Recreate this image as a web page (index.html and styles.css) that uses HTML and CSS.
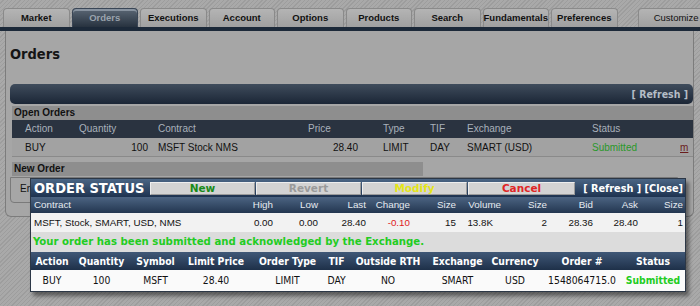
FILE: index.html
```html
<!DOCTYPE html>
<html>
<head>
<meta charset="utf-8">
<link rel="stylesheet" href="styles.css">
</head>
<body>
<div class="tabs">
  <div class="tab">Market</div>
  <div class="tab active">Orders</div>
  <div class="tab">Executions</div>
  <div class="tab">Account</div>
  <div class="tab">Options</div>
  <div class="tab">Products</div>
  <div class="tab">Search</div>
  <div class="tab">Fundamentals</div>
  <div class="tab">Preferences</div>
  <div class="tab custom">Customize</div>
</div>
<div class="navline"></div>
<div class="panel">
  <h1 class="title">Orders</h1>
  <div class="refreshbar"><span>[ Refresh ]</span></div>
  <div class="section">
    <div class="sechead">Open Orders</div>
    <div class="oo-row oo-head">
      <span>Action</span><span>Quantity</span><span>Contract</span><span>Price</span><span>Type</span><span>TIF</span><span>Exchange</span><span>Status</span><span></span>
    </div>
    <div class="oo-row oo-data">
      <span>BUY</span><span class="num">100</span><span>MSFT Stock NMS</span><span class="num price">28.40</span><span>LIMIT</span><span>DAY</span><span>SMART (USD)</span><span class="ok">Submitted</span><span class="link">m</span>
    </div>
    <div class="sechead short">New Order</div>
    <div class="entrybox">En</div>
  </div>
</div>

<div class="modal">
  <div class="mtitle">
    <span class="mname">ORDER STATUS</span>
    <div class="mbtns">
      <span class="btn new">New</span>
      <span class="btn revert">Revert</span>
      <span class="btn modify">Modify</span>
      <span class="btn cancel">Cancel</span>
    </div>
    <span class="mlinks">[ Refresh ] [Close]</span>
  </div>
  <div class="md-row md-head">
    <span class="c">Contract</span><span>High</span><span>Low</span><span>Last</span><span>Change</span><span>Size</span><span>Volume</span><span>Size</span><span>Bid</span><span>Ask</span><span>Size</span>
  </div>
  <div class="md-row md-data">
    <span class="c">MSFT, Stock, SMART, USD, NMS</span><span>0.00</span><span>0.00</span><span>28.40</span><span class="neg">-0.10</span><span>15</span><span class="vol">13.8K</span><span>2</span><span>28.36</span><span>28.40</span><span>1</span>
  </div>
  <div class="msg">Your order has been submitted and acknowledged by the Exchange.</div>
  <div class="od-row od-head">
    <span>Action</span><span>Quantity</span><span>Symbol</span><span>Limit Price</span><span>Order Type</span><span>TIF</span><span>Outside RTH</span><span>Exchange</span><span>Currency</span><span>Order #</span><span>Status</span>
  </div>
  <div class="od-row od-data">
    <span>BUY</span><span>100</span><span>MSFT</span><span>28.40</span><span>LIMIT</span><span>DAY</span><span>NO</span><span>SMART</span><span>USD</span><span>1548064715.0</span><span class="sub">Submitted</span>
  </div>
</div>
</body>
</html>
```
FILE: styles.css
```css
* { box-sizing: border-box; }
html, body { margin: 0; padding: 0; }
body {
  width: 700px;
  height: 306px;
  overflow: hidden;
  position: relative;
  font-family: "Liberation Sans", Arial, sans-serif;
  background: repeating-linear-gradient(135deg, #a9a9a9 0 2px, #9d9d9d 2px 3px);
}
.tabs {
  height: 27px;
  display: flex;
  align-items: flex-end;
  gap: 2px;
  padding-left: 3px;
}
.tab {
  width: 66.5px;
  height: 19px;
  flex: none;
  border: 1px solid #8a8a8a;
  border-bottom: none;
  border-radius: 4px 4px 0 0;
  background: linear-gradient(#b4b4b4, #a0a0a0);
  font-size: 9.5px;
  font-weight: bold;
  color: #111;
  text-align: center;
  line-height: 18px;
  white-space: nowrap;
}
.tab.active {
  background: linear-gradient(#5a6674, #27323f);
  border-color: #3a4656;
  color: #9aa3ad;
  box-shadow: inset 0 2px 0 #8893a0;
}
.tab.custom {
  margin-left: 18px;
  width: 70px;
  font-weight: normal;
  text-align: right;
  padding-right: 8px;
}
.navline { height: 4px; background: #1c2939; }
.panel {
  margin-left: 5px;
  width: 689px;
  height: 186px;
  background: #a6a6a6;
  border-left: 1px solid #7c7c7c;
  border-right: 1px solid #7c7c7c;
  border-bottom: 1px solid #7c7c7c;
  border-radius: 0 0 6px 6px;
  padding: 14px 0 0 4px;
}
.title {
  margin: 0;
  font-family: "DejaVu Sans", Verdana, sans-serif;
  font-stretch: condensed;
  font-size: 14.5px;
  font-weight: bold;
  line-height: 18px;
  color: #151515;
  height: 18px;
}
.refreshbar {
  margin-top: 21px;
  height: 20px;
  border-radius: 5px;
  background: linear-gradient(#3f4c5c, #1b2636);
  display: flex;
  justify-content: flex-end;
  align-items: center;
  padding-right: 5px;
}
.refreshbar span {
  font-family: "DejaVu Sans", Verdana, sans-serif;
  font-stretch: condensed;
  font-size: 10.5px;
  font-weight: bold;
  color: #b5bdc6;
}
.section { margin-top: 2px; margin-left: 2px; }
.sechead {
  height: 14px;
  background: #8e8e8e;
  font-size: 10px;
  font-weight: bold;
  line-height: 14px;
  color: #111;
  padding-left: 2px;
}
.sechead.short { width: 411px; margin-top: 5px; }
.oo-row {
  display: grid;
  grid-template-columns: 54px 79px 150px 75px 47px 37px 125px 88px 1fr;
  padding-left: 13px;
  font-size: 10px;
  white-space: nowrap;
}
.oo-head { height: 18px; line-height: 18px; background: #2a3340; color: #a9b1bb; }
.oo-data { height: 19px; line-height: 19px; background: #a2a2a2; color: #111; border-bottom: 1px solid #8a8a8a; }
.oo-data .num { text-align: right; padding-right: 10px; }
.oo-data .price { padding-right: 25px; }
.oo-data .ok { color: #2a982a; }
.oo-data .link { color: #6a1c1c; text-decoration: underline; }
.entrybox {
  margin-top: 1px;
  margin-left: -2px;
  width: 668px;
  height: 26px;
  border: 1px solid #7a7a7a;
  border-radius: 0 0 4px 4px;
  font-size: 10px;
  line-height: 22px;
  padding-left: 9px;
  color: #111;
}

.modal {
  position: absolute;
  left: 30px;
  top: 178px;
  width: 656px;
  border: 1px solid #2c3746;
  background: #f4f4f4;
  box-shadow: 3px 4px 4px rgba(0,0,0,0.45);
}
.mtitle {
  height: 18px;
  background: linear-gradient(#4a6584, #1e3350);
  display: flex;
  align-items: center;
  padding-left: 3px;
}
.mname {
  width: 116px;
  flex: none;
  font-family: "DejaVu Sans", Verdana, sans-serif;
  font-stretch: condensed;
  font-size: 14.5px;
  font-weight: bold;
  color: #fff;
  white-space: nowrap;
}
.mbtns { display: flex; gap: 1px; }
.btn {
  width: 105px;
  height: 13px;
  background: #d3d3d3;
  border: 1px solid #9a9a9a;
  border-top-color: #eee;
  border-left-color: #eee;
  font-family: "DejaVu Sans", Verdana, sans-serif;
  font-size: 10.5px;
  font-weight: bold;
  text-align: center;
  line-height: 11px;
}
.btn.new { color: #1a8a1a; }
.btn.revert { color: #9a9a9a; }
.btn.modify { color: #e5e51a; }
.btn.cancel { color: #e02525; width: 107px; }
.mlinks {
  margin-left: auto;
  padding-right: 2px;
  font-family: "DejaVu Sans", Verdana, sans-serif;
  font-stretch: condensed;
  font-size: 10.8px;
  font-weight: bold;
  color: #fff;
  white-space: nowrap;
}
.md-row {
  display: grid;
  grid-template-columns: 194px 48px 45px 48px 44px 46px 45px 46px 46px 45px 45px;
  font-size: 9.8px;
  white-space: nowrap;
  text-align: right;
}
.md-row .c { text-align: left; padding-left: 3px; }
.md-head { height: 16px; line-height: 16px; background: linear-gradient(#4c6482, #233650); color: #e6ebf1; }
.md-data { height: 19px; line-height: 19px; background: #f2f2f2; color: #111; }
.md-data .neg { color: #e01c1c; }
.md-data .vol { padding-right: 8px; }
.msg {
  height: 20px;
  line-height: 20px;
  background: #dcdcdc;
  color: #22cc22;
  font-family: "DejaVu Sans", Verdana, sans-serif;
  font-stretch: condensed;
  font-size: 11.3px;
  font-weight: bold;
  padding-left: 2px;
  white-space: nowrap;
}
.od-row {
  display: grid;
  grid-template-columns: 42px 57px 51px 70px 73px 25px 78px 61px 54px 80px 62px;
  font-family: "DejaVu Sans", Verdana, sans-serif;
  font-stretch: condensed;
  font-size: 10.3px;
  text-align: center;
  white-space: nowrap;
}
.od-head { height: 18px; line-height: 18px; background: linear-gradient(#405877, #1e3049); color: #fff; font-weight: bold; }
.od-data { height: 21px; line-height: 21px; background: #fafafa; color: #111; }
.od-data .sub { color: #22cc22; font-weight: bold; }
```
